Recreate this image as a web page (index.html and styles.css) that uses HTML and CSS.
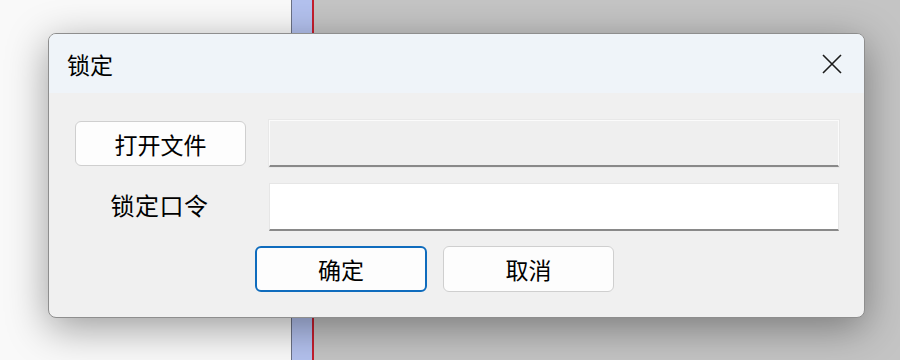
FILE: index.html
```html
<!DOCTYPE html>
<html lang="zh-CN">
<head>
<meta charset="utf-8">
<title>锁定</title>
<link rel="stylesheet" href="styles.css">
</head>
<body>
<div class="desk">
  <div class="pane-left"></div>
  <div class="splitter"></div>
  <div class="pane-right"></div>
</div>
<div class="dialog">
  <div class="titlebar">
    <span class="title">锁定</span>
    <span class="close" aria-label="关闭">
      <svg width="20" height="20" viewBox="0 0 20 20"><path d="M1 1 L19 19 M19 1 L1 19" stroke="#1b1b1b" stroke-width="1.6" fill="none"/></svg>
    </span>
  </div>
  <div class="body">
    <div class="form">
      <button class="btn file-btn">打开文件</button>
      <div class="field readonly"></div>
      <span class="label">锁定口令</span>
      <div class="field"></div>
    </div>
    <div class="actions">
      <button class="btn primary">确定</button>
      <button class="btn">取消</button>
    </div>
  </div>
</div>
</body>
</html>
```

FILE: styles.css
```css
html, body {
  margin: 0;
  padding: 0;
  width: 900px;
  height: 360px;
  overflow: hidden;
  font-family: "Noto Sans CJK SC", "Microsoft YaHei", sans-serif;
}
.desk {
  display: flex;
  height: 360px;
}
.pane-left {
  width: 291px;
  background: #f9f9f9;
}
.splitter {
  width: 20px;
  background: #b3c1ee;
  border-left: 1px solid #6b7185;
  border-right: 2px solid #c41e2e;
}
.pane-right {
  flex: 1;
  background: #c4c4c4;
}
.dialog {
  position: absolute;
  left: 48px;
  top: 33px;
  width: 815px;
  height: 283px;
  border: 1px solid #8e8e8e;
  border-radius: 8px;
  background: #f0f0f0;
  box-shadow: 0 10px 40px rgba(0, 0, 0, 0.38);
  overflow: hidden;
  display: flex;
  flex-direction: column;
}
.titlebar {
  height: 59px;
  background: #eff4f9;
  display: flex;
  align-items: center;
  justify-content: space-between;
  padding: 0 22px 0 18px;
}
.title {
  font-size: 23px;
  color: #000;
}
.close {
  display: flex;
  margin-top: 1px;
}
.body {
  padding: 27px 0 0 26px;
  display: flex;
  flex-direction: column;
}
.form {
  display: grid;
  grid-template-columns: 171px 570px;
  grid-template-rows: 47px 48px;
  column-gap: 23px;
  row-gap: 16px;
  align-items: center;
}
.btn {
  font-family: inherit;
  font-size: 23px;
  color: #000;
  background: #fdfdfd;
  border: 1px solid #cfcfcf;
  border-radius: 6px;
  height: 46px;
  width: 171px;
  padding: 0;
  display: flex;
  align-items: center;
  justify-content: center;
}
.file-btn {
  height: 45px;
  align-self: start;
  margin-top: 1px;
}
.field {
  height: 100%;
  box-sizing: border-box;
  background: #ffffff;
  border: 1px solid #e6e6e6;
  border-bottom: 2px solid #898989;
}
.field.readonly {
  background: #efefef;
  border: 1px solid #fbfbfb;
  border-bottom: 2px solid #898989;
  box-shadow: 0 0 0 1px #e8e8e8;
}
.label {
  font-size: 24px;
  letter-spacing: 0.5px;
  color: #000;
  justify-self: center;
  margin: 0 0 6px -2px;
}
.actions {
  display: flex;
  gap: 16px;
  margin-top: 15px;
  padding-left: 180px;
}
.btn.primary {
  width: 172px;
  border: 2px solid #0f6cbd;
}
```
